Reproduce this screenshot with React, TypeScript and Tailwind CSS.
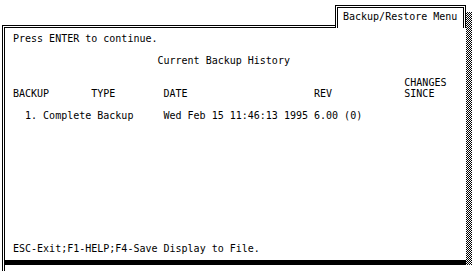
import React from "react";

export default function App() {
  return (
    <div
      className="flex w-[476px] h-[271px] bg-white text-black text-[10px] leading-[11px]"
      style={{ fontFamily: '"DejaVu Sans Mono", "Liberation Mono", monospace' }}
    >
      <div className="flex flex-col w-[466px] pl-[2px] pt-[5px]">
        <div className="flex h-[23px]">
          <div className="flex-1 self-end h-[3px] border-t-[3px] border-l-[3px] border-double border-black" />
          <div className="w-[131px] border-t-[3px] border-x-[3px] border-double border-black pl-[5px] pt-[3px] whitespace-pre">
            Backup/Restore Menu
          </div>
        </div>
        <div className="flex flex-col flex-1 border-l-[3px] border-double border-black">
          <div className="flex flex-col flex-1 pl-[8px] pt-[5px]">
            <div>Press ENTER to continue.</div>
            <div className="mt-[11px] pl-[24ch]">Current Backup History</div>
            <div className="mt-[11px] grid grid-cols-[13ch_12ch_25ch_15ch_auto] items-end">
              <div>BACKUP</div>
              <div>TYPE</div>
              <div>DATE</div>
              <div>REV</div>
              <div className="flex flex-col">
                <span>CHANGES</span>
                <span>SINCE</span>
              </div>
            </div>
            <div className="mt-[11px] grid grid-cols-[25ch_auto]">
              <div className="pl-[2ch]">1. Complete Backup</div>
              <div className="whitespace-pre">Wed Feb 15 11:46:13 1995 6.00 (0)</div>
            </div>
            <div className="mt-auto mb-[6px]">ESC-Exit;F1-HELP;F4-Save Display to File.</div>
          </div>
          <div className="h-[5px] bg-black mb-[6px]" />
        </div>
      </div>
      <div className="w-[6px] mt-[12px] mb-[6px] bg-[repeating-conic-gradient(#000_0%_25%,#fff_0%_50%)] bg-[length:2px_2px]" />
    </div>
  );
}
